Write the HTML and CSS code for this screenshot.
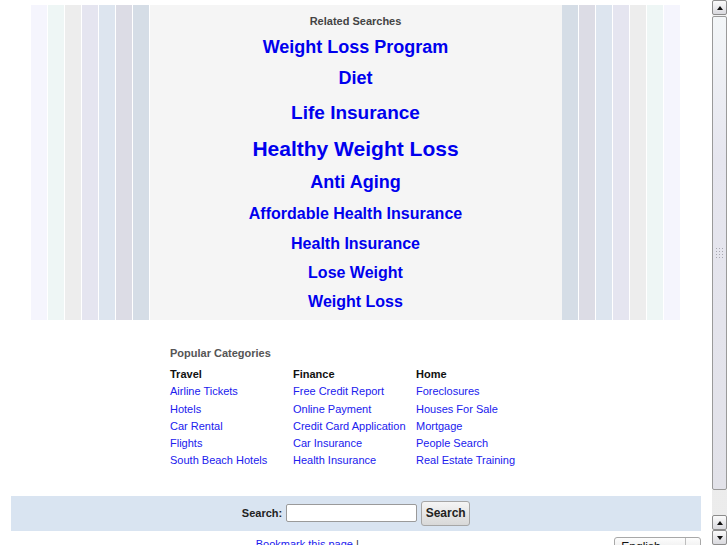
FILE: index.html
```html
<!DOCTYPE html>
<html>
<head>
<meta charset="utf-8">
<title>Related Searches</title>
<link rel="stylesheet" href="styles.css">
</head>
<body>
<div class="page">
  <div class="banner">
    <div class="stripes left">
      <span class="s1"></span><span class="s2"></span><span class="s3"></span><span class="s4"></span><span class="s5"></span><span class="s6"></span><span class="s7"></span>
    </div>
    <div class="related">
      <div class="rel-title">Related Searches</div>
      <a class="rl first f18" href="#">Weight Loss Program</a>
      <a class="rl h34 f18" href="#">Diet</a>
      <a class="rl h36 f19" href="#">Life Insurance</a>
      <a class="rl h35 f21" href="#">Healthy Weight Loss</a>
      <a class="rl h32 f18" href="#">Anti Aging</a>
      <a class="rl h31 f16" href="#">Affordable Health Insurance</a>
      <a class="rl h29 f16" href="#">Health Insurance</a>
      <a class="rl h29 f16" href="#">Lose Weight</a>
      <a class="rl h29 f16" href="#">Weight Loss</a>
    </div>
    <div class="stripes right">
      <span class="s7"></span><span class="s6"></span><span class="s5"></span><span class="s4"></span><span class="s3"></span><span class="s2"></span><span class="s1"></span>
    </div>
  </div>

  <div class="cats">
    <div class="cats-title">Popular Categories</div>
    <div class="cat-grid">
      <div class="col">
        <div class="col-head">Travel</div>
        <a href="#">Airline Tickets</a>
        <a href="#">Hotels</a>
        <a href="#">Car Rental</a>
        <a href="#">Flights</a>
        <a href="#">South Beach Hotels</a>
      </div>
      <div class="col">
        <div class="col-head">Finance</div>
        <a href="#">Free Credit Report</a>
        <a href="#">Online Payment</a>
        <a href="#">Credit Card Application</a>
        <a href="#">Car Insurance</a>
        <a href="#">Health Insurance</a>
      </div>
      <div class="col">
        <div class="col-head">Home</div>
        <a href="#">Foreclosures</a>
        <a href="#">Houses For Sale</a>
        <a href="#">Mortgage</a>
        <a href="#">People Search</a>
        <a href="#">Real Estate Training</a>
      </div>
    </div>
  </div>

  <div class="searchbar">
    <label class="search-label" for="q">Search:</label>
    <input class="search-input" id="q" type="text">
    <button class="search-btn" type="button">Search</button>
  </div>

  <div class="footer">
    <span class="bm"><a href="#">Bookmark this page</a> |</span>
    <div class="lang"><span class="lang-text">English</span><span class="lang-arrow"></span></div>
  </div>
</div>

<div class="scrollbar">
  <div class="sb-btn up"></div>
  <div class="sb-thumb"><span class="grip"></span></div>
  <div class="sb-track"></div>
  <div class="sb-btn up"></div>
  <div class="sb-btn down"></div>
</div>
</body>
</html>
```

FILE: styles.css
```css
html, body {
  margin: 0;
  padding: 0;
  background: #ffffff;
  overflow: hidden;
  height: 545px;
}

body {
  font-family: "Liberation Sans", Arial, sans-serif;
  color: #111;
}

.page {
  width: 712px;
}

/* ---------- top banner ---------- */
.banner {
  width: 651px;
  margin: 5px auto 0;
  display: flex;
}

.stripes {
  display: flex;
  flex: 0 0 119px;
}

.stripes.right {
  flex-basis: 120px;
}

.stripes span {
  flex: 1 1 0;
  margin-right: 1px;
}

.s1 { background: #f5f5fd; }
.s2 { background: #eef6f5; }
.s3 { background: #ededed; }
.s4 { background: #e5e5f0; }
.s5 { background: #dde5ef; }
.s6 { background: #dcdce5; }
.s7 { background: #d5dde6; }

.related {
  flex: 1;
  background: #f5f5f5;
  padding: 10px 0 4px;
  display: flex;
  flex-direction: column;
  align-items: center;
}

.rel-title {
  font-size: 11px;
  line-height: 13px;
  font-weight: bold;
  color: #444;
}

.rl {
  display: block;
  font-weight: bold;
  color: #0000ee;
  text-decoration: none;
  text-align: center;
  white-space: nowrap;
}

.rl.first {
  padding-top: 5px;
  line-height: 29px;
}

.f16 { font-size: 16px; }
.f18 { font-size: 18px; }
.f19 { font-size: 19px; }
.f21 { font-size: 21px; }

.h29 { line-height: 29px; }
.h31 { line-height: 31px; }
.h32 { line-height: 32px; }
.h34 { line-height: 33px; }
.h35 { line-height: 35px; }
.h36 { line-height: 36px; }

/* ---------- popular categories ---------- */
.cats {
  width: 372px;
  margin: 26px auto 0;
}

.cats-title {
  font-size: 11px;
  line-height: 14px;
  font-weight: bold;
  color: #555;
  margin-bottom: 6px;
}

.cat-grid {
  display: grid;
  grid-template-columns: 123px 123px 126px;
}

.col {
  display: flex;
  flex-direction: column;
  font-size: 11px;
  line-height: 17.25px;
}

.col-head {
  font-weight: bold;
  color: #111;
}

.col a {
  color: #2020ee;
  text-decoration: none;
  white-space: nowrap;
}

/* ---------- search bar ---------- */
.searchbar {
  width: 97%;
  margin: 26px auto 0;
  height: 35px;
  background: #d9e4f1;
  display: flex;
  align-items: center;
  justify-content: center;
}

.search-label {
  font-size: 11px;
  font-weight: bold;
  color: #222;
}

.search-input {
  box-sizing: border-box;
  width: 131px;
  height: 18px;
  margin: 0 0 0 4px;
  padding: 0 3px;
  border: 1px solid #9a9a9a;
  border-radius: 2px;
  background: #fff;
  font: 11px "Liberation Sans", Arial, sans-serif;
  outline: none;
}

.search-btn {
  box-sizing: border-box;
  width: 49px;
  height: 25px;
  margin: 0 0 0 4px;
  padding: 0;
  border: 1px solid #a6a6a6;
  border-radius: 3px;
  background: linear-gradient(#f5f5f5, #d8d8d8);
  font: bold 12px "Liberation Sans", Arial, sans-serif;
  color: #222;
}

/* ---------- footer ---------- */
.footer {
  width: 97%;
  margin: 6px auto 0;
  display: flex;
  justify-content: space-between;
  align-items: flex-start;
}

.bm {
  margin-left: 245px;
  font-size: 11px;
  line-height: 14px;
  color: #333;
}

.bm a {
  color: #2020ee;
  text-decoration: none;
}

.lang {
  box-sizing: border-box;
  width: 87px;
  height: 20px;
  border: 1px solid #a8a8a8;
  border-radius: 3px;
  background: linear-gradient(#fdfdfd, #e4e4e4);
  display: flex;
  font-size: 12px;
  line-height: 18px;
  color: #111;
}

.lang-text {
  flex: 1;
  padding-left: 6px;
}

.lang-arrow {
  width: 14px;
  border-left: 1px solid #bdbdbd;
}

/* ---------- fake window scrollbar ---------- */
.scrollbar {
  position: fixed;
  top: 0;
  right: 0;
  width: 15px;
  height: 545px;
  display: flex;
  flex-direction: column;
  background: #f3f3f3;
}

.sb-btn {
  box-sizing: border-box;
  height: 15px;
  flex: 0 0 15px;
  border: 1px solid #8c8c8c;
  border-radius: 2px;
  background: linear-gradient(#fbfbfb, #d9d9de);
  display: flex;
  align-items: center;
  justify-content: center;
}

.sb-btn.up::after,
.sb-btn.down::after {
  content: "";
  width: 0;
  height: 0;
  border-left: 3px solid transparent;
  border-right: 3px solid transparent;
}

.sb-btn.up::after {
  border-bottom: 4px solid #111;
}

.sb-btn.down::after {
  border-top: 4px solid #111;
}

.sb-thumb {
  box-sizing: border-box;
  margin-top: 1px;
  height: 474px;
  flex: 0 0 474px;
  border: 1px solid #9a9a9a;
  border-radius: 2px;
  background: linear-gradient(#f3f6f8, #e6e6ef 30%, #e2e2e9);
  display: flex;
  align-items: center;
  justify-content: center;
}

.grip {
  width: 9px;
  height: 12px;
  background-image: radial-gradient(circle, #a8a8b0 0.8px, transparent 1px);
  background-size: 3px 3px;
}

.sb-track {
  flex: 1;
  background-color: #f4f4f4;
  background-image: radial-gradient(circle, #e2e2e2 0.6px, transparent 0.8px);
  background-size: 2px 2px;
}
```
